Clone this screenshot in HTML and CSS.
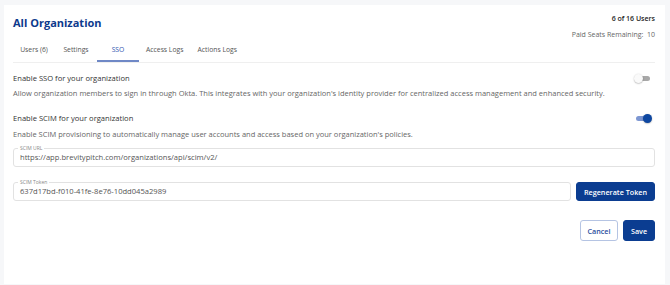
FILE: index.html
```html
<!DOCTYPE html>
<html lang="en">
  <head>
    <meta charset="utf-8" />
    <meta name="viewport" content="width=device-width,initial-scale=1" />
    <title>All Organization - SSO</title>
    <link rel="stylesheet" href="styles.css">
  </head>
  <body>
    <div class="card">
      <div class="header">
        <h1 class="title">All Organization</h1>
        <div class="stats">
          <div class="stats-users">6 of 16 Users</div>
          <div class="stats-seats">Paid Seats Remaining:&nbsp; 10</div>
        </div>
      </div>

      <div class="tabs">
        <div class="tab">Users (6)</div>
        <div class="tab">Settings</div>
        <div class="tab active">SSO</div>
        <div class="tab">Access Logs</div>
        <div class="tab">Actions Logs</div>
      </div>

      <div class="section">
        <div class="option">
          <div class="option-title">Enable SSO for your organization</div>
          <span class="switch"></span>
        </div>
        <div class="option-desc">Allow organization members to sign in through Okta. This integrates with your organization's identity provider for centralized access management and enhanced security.</div>

        <div class="option option-second">
          <div class="option-title">Enable SCIM for your organization</div>
          <span class="switch on"></span>
        </div>
        <div class="option-desc">Enable SCIM provisioning to automatically manage user accounts and access based on your organization's policies.</div>

        <div class="field field-url">
          <label class="field-label">SCIM URL</label>
          <div class="field-value">https://app.brevitypitch.com/organizations/api/scim/v2/</div>
        </div>

        <div class="token-row">
          <div class="field">
            <label class="field-label">SCIM Token</label>
            <div class="field-value">637d17bd-f010-41fe-8e76-10dd045a2989</div>
          </div>
          <button class="btn btn-primary btn-regen">Regenerate Token</button>
        </div>

        <div class="actions">
          <button class="btn btn-outline">Cancel</button>
          <button class="btn btn-primary">Save</button>
        </div>
      </div>
    </div>
  </body>
</html>
```

FILE: styles.css
```css
html {
  height: 100%;
}

body {
  margin: 0;
  height: 100%;
  background: #f6f7f9;
  font-family: "Open Sans", "Noto Sans", sans-serif;
  padding: 5px 5px 1px 4px;
  box-sizing: border-box;
}

.card {
  background: white;
  height: 100%;
  box-sizing: border-box;
  padding: 9px 10px 0 9px;
}

.header {
  display: flex;
  justify-content: space-between;
  align-items: flex-start;
}

.title {
  margin: 0;
  font-size: 11px;
  line-height: 18px;
  font-weight: 700;
  color: #0d3a8c;
}

.stats {
  margin-top: -1px;
  text-align: right;
  font-size: 7px;
  line-height: 12px;
}

.stats-users {
  color: #222;
  font-weight: 600;
}

.stats-seats {
  margin-top: 4px;
  color: #666;
}

.tabs {
  display: flex;
  margin-top: 4px;
  border-bottom: 1px solid #efefef;
}

.tab {
  min-width: 42px;
  box-sizing: border-box;
  padding: 0 7px 5px;
  text-align: center;
  font-size: 6.8px;
  line-height: 10px;
  color: #555;
  border-bottom: 2px solid transparent;
}

.tab.active {
  color: #2f56b0;
  border-bottom-color: #6f88c6;
}

.section {
  padding-top: 9px;
}

.option {
  display: flex;
  justify-content: space-between;
  align-items: center;
}

.option-second {
  margin-top: 13px;
}

.option-title {
  font-size: 7.6px;
  line-height: 12px;
  color: #333;
}

.option-desc {
  margin-top: 3px;
  font-size: 7.5px;
  line-height: 12px;
  color: #666;
}

.option-second + .option-desc {
  margin-top: 4px;
}

.switch {
  position: relative;
  width: 14px;
  height: 5px;
  margin-right: 5px;
  border-radius: 3px;
  background: #a8a8a8;
}

.switch::after {
  content: "";
  position: absolute;
  left: -2px;
  top: -2px;
  width: 9px;
  height: 9px;
  border-radius: 50%;
  background: #fafafa;
  box-shadow: 0 0.5px 1.5px rgba(0, 0, 0, 0.35);
}

.switch.on {
  background: #7d97d2;
}

.switch.on::after {
  left: 7px;
  background: #0d47a1;
}

.field {
  position: relative;
  flex: 1;
  height: 19px;
  box-sizing: border-box;
  border: 1px solid #e2e2e2;
  border-radius: 3px;
  padding: 0 6px;
}

.field-url {
  margin-top: 8px;
}

.field-label {
  position: absolute;
  left: 4px;
  top: -4px;
  padding: 0 2px;
  background: white;
  font-size: 5px;
  line-height: 6px;
  color: #888;
}

.field-value {
  font-size: 7.6px;
  line-height: 17px;
  color: #555;
}

.token-row {
  display: flex;
  gap: 5px;
  margin-top: 15px;
}

.btn {
  font-family: "Open Sans", "Noto Sans", sans-serif;
  font-size: 7.2px;
  font-weight: 600;
  border-radius: 3px;
  box-sizing: border-box;
  padding: 0;
  cursor: pointer;
}

.btn-primary {
  background: #0b3d91;
  border: 1px solid #0b3d91;
  color: white;
}

.btn-outline {
  background: white;
  border: 1px solid #b5c4e3;
  color: #2c4f9e;
  width: 38px;
}

.btn-regen {
  width: 79px;
  height: 19px;
}

.actions {
  display: flex;
  justify-content: flex-end;
  gap: 5px;
  margin-top: 19px;
}

.actions .btn {
  height: 21px;
}

.actions .btn-primary {
  width: 32px;
}
```
